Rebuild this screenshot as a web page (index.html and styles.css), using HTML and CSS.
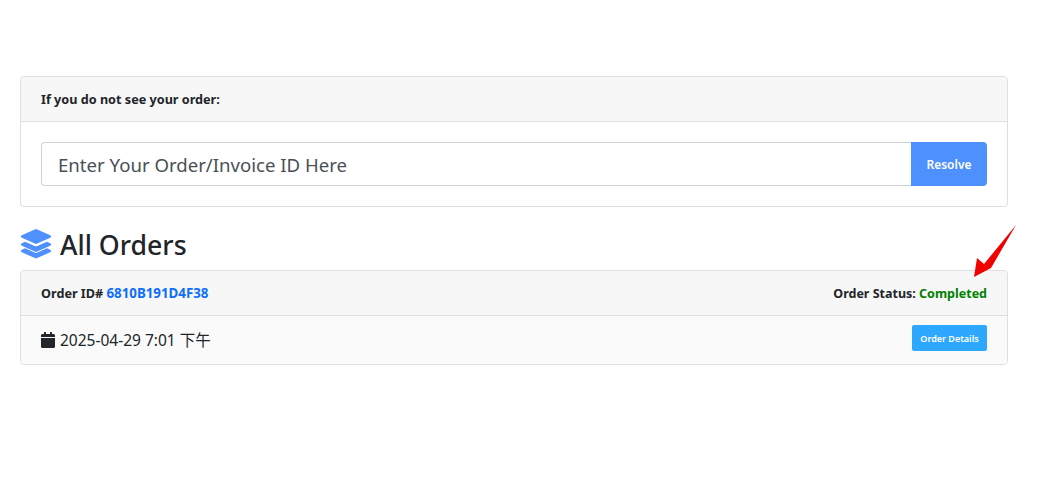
FILE: index.html
```html
<!DOCTYPE html>
<html lang="en">
<head>
    <meta charset="UTF-8">
    <meta name="viewport" content="width=device-width, initial-scale=1.0">
    <title>All Orders</title>
    <link rel="stylesheet" href="styles.css">
</head>
<body>
    <div class="page">
        <div class="card">
            <div class="card-header"><b>If you do not see your order:</b></div>
            <div class="card-body">
                <form class="input-group">
                    <input class="order-input" type="text" placeholder="Enter Your Order/Invoice ID Here">
                    <button class="resolve-btn" type="button">Resolve</button>
                </form>
            </div>
        </div>

        <h2 class="page-title">
            <svg class="layers-icon" viewBox="0 0 512 512" aria-hidden="true">
                <path d="M12.41 148.02l232.94 105.67c6.8 3.09 14.49 3.09 21.29 0l232.94-105.67c16.55-7.51 16.55-32.52 0-40.03L266.65 2.31a25.607 25.607 0 0 0-21.29 0L12.41 107.98c-16.55 7.51-16.55 32.53 0 40.04z"/>
                <path d="M499.59 243.91l-58.09-26.33-161.64 73.27c-7.56 3.43-15.59 5.17-23.86 5.17s-16.29-1.74-23.86-5.17L70.51 217.58l-58.1 26.33c-16.55 7.5-16.55 32.5 0 40l232.94 105.59c6.8 3.08 14.49 3.08 21.29 0L499.59 283.91c16.55-7.5 16.55-32.5 0-40z"/>
                <path d="M499.59 355.41l-57.87-26.23-161.86 73.37c-7.56 3.43-15.59 5.17-23.86 5.17s-16.29-1.74-23.86-5.17L70.29 329.18l-57.88 26.23c-16.55 7.5-16.55 32.5 0 40l232.94 105.59c6.8 3.08 14.49 3.08 21.29 0l232.95-105.59c16.55-7.5 16.55-32.5 0-40z"/>
            </svg>
            All Orders
        </h2>

        <div class="card">
            <div class="card-header order-header">
                <b>Order ID# <a class="order-link" href="#">6810B191D4F38</a></b>
                <b class="order-status">Order Status: <span class="status-done">Completed</span></b>
            </div>
            <div class="order-row">
                <span class="order-date">
                    <svg class="calendar-icon" viewBox="0 0 448 512" aria-hidden="true">
                        <path d="M0 464c0 26.5 21.5 48 48 48h352c26.5 0 48-21.5 48-48V192H0v272zM448 112v48H0v-48c0-26.5 21.500-48 48-48h48V16c0-8.800 7.200-16 16-16h32c8.800 0 16 7.200 16 16v48h128V16c0-8.800 7.200-16 16-16h32c8.800 0 16 7.200 16 16v48h48c26.500 0 48 21.500 48 48z"/>
                    </svg>
                    2025-04-29 7:01 下午
                </span>
                <a class="details-btn" href="#">Order Details</a>
            </div>
        </div>
    </div>

    <!-- red arrow drawn on top of the screenshot -->
    <svg class="arrow-mark" viewBox="0 0 50 60" aria-hidden="true">
        <polygon points="4,55 7,36 14,42 46,3 21,46"/>
    </svg>
</body>
</html>
```

FILE: styles.css
```css
* {
    margin: 0;
    padding: 0;
    box-sizing: border-box;
}

body {
    position: relative;
    font-family: "Noto Sans", "Noto Sans CJK SC", sans-serif;
    font-size: 15px;
    color: #212529;
    background-color: #fff;
}

.page {
    width: 988px;
    margin-left: 20px;
    padding-top: 76px;
}

.card {
    border: 1px solid #dfdfdf;
    border-radius: 4px;
    overflow: hidden;
}

.card-header {
    height: 45px;
    padding: 0 20px;
    display: flex;
    align-items: center;
    font-size: 12.65px;
    background-color: #f7f7f7;
    border-bottom: 1px solid #dfdfdf;
}

.card-body {
    padding: 20px;
}

.input-group {
    display: flex;
    height: 44px;
}

.order-input {
    flex: 1;
    padding: 1px 16px 0;
    font-family: inherit;
    font-size: 18.6px;
    color: #495057;
    border: 1px solid #ced4da;
    border-right: none;
    border-radius: 4px 0 0 4px;
    outline: none;
}

.order-input::placeholder {
    color: #495057;
    opacity: 1;
}

.resolve-btn {
    width: 76px;
    font-family: inherit;
    font-size: 12px;
    font-weight: 600;
    color: #fff;
    background-color: #4d90fe;
    border: none;
    border-radius: 0 4px 4px 0;
}

.page-title {
    display: flex;
    align-items: center;
    gap: 9px;
    height: 63px;
    padding-top: 11px;
    font-size: 26.7px;
    font-weight: 500;
}

.layers-icon {
    width: 30px;
    height: 30px;
    margin-left: 1px;
    fill: #4d90fe;
}

.order-header {
    justify-content: space-between;
}

.order-link {
    font-size: 13.3px;
    color: #0d6efd;
    text-decoration: none;
}

.order-status {
    font-size: 12.5px;
}

.status-done {
    color: #008000;
}

.order-row {
    height: 48px;
    padding: 0 20px;
    display: flex;
    align-items: center;
    justify-content: space-between;
    background-color: #fafafa;
}

.order-date {
    display: flex;
    align-items: center;
    gap: 5px;
    margin-bottom: 1px;
    font-size: 15.5px;
}

.calendar-icon {
    width: 14px;
    height: 16px;
    fill: #212529;
}

.details-btn {
    display: flex;
    align-items: center;
    justify-content: center;
    width: 75px;
    height: 26px;
    margin-bottom: 4px;
    font-size: 9px;
    font-weight: 600;
    color: #fff;
    text-decoration: none;
    background-color: #2ea8ff;
    border-radius: 2px;
}

.arrow-mark {
    position: absolute;
    left: 970px;
    top: 222px;
    width: 50px;
    height: 60px;
    fill: #f00000;
}
```
